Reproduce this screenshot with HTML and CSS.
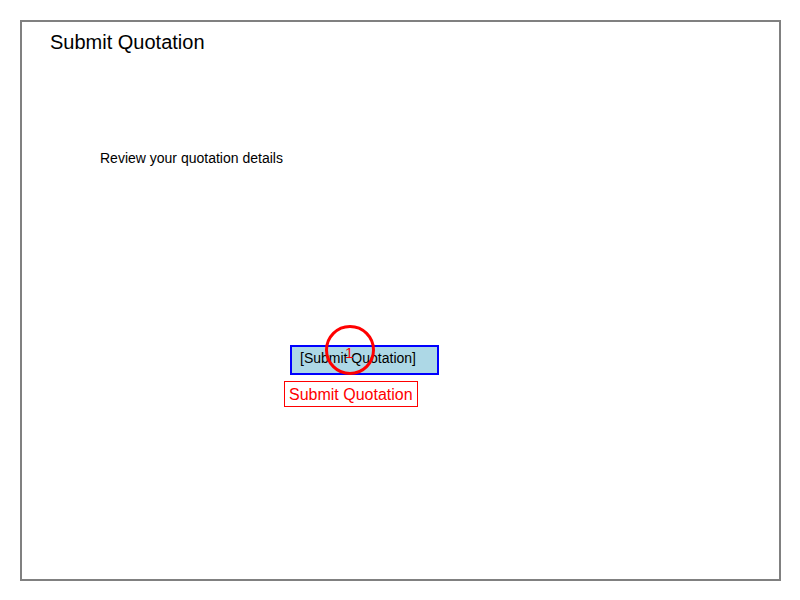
FILE: index.html
```html
<!DOCTYPE html>
<html>
<head>
<meta charset="utf-8">
<link rel="stylesheet" href="styles.css">
</head>
<body>
<div class="frame">
  <h1 class="title">Submit Quotation</h1>
  <p class="subtitle">Review your quotation details</p>
  <div class="action">
    <div class="button">[Submit Quotation]</div>
    <div class="marker"><span class="marker-num">1</span></div>
    <div class="label">Submit Quotation</div>
  </div>
</div>
</body>
</html>
```

FILE: styles.css
```css
html, body {
  margin: 0;
  padding: 0;
  background: #ffffff;
  font-family: "Liberation Sans", Arial, sans-serif;
}
.frame {
  position: relative;
  box-sizing: border-box;
  margin: 20px 0 0 20px;
  width: 761px;
  height: 561px;
  border: 2px solid #808080;
  padding: 9px 28px 0;
}
.title {
  margin: 0;
  font-size: 20px;
  font-weight: normal;
  line-height: 23px;
  color: #000;
}
.subtitle {
  margin: 96px 0 0 50px;
  font-size: 14px;
  line-height: 16px;
  color: #000;
}
.action {
  position: relative;
  margin: 179px 0 0 240px;
  width: 200px;
  height: 70px;
}
.button {
  box-sizing: border-box;
  width: 149px;
  height: 30px;
  border: 2px solid #0000ff;
  background: #add8e6;
  padding: 3px 0 0 8px;
  font-size: 14px;
  line-height: 16px;
  color: #000;
}
.marker {
  position: absolute;
  left: 35px;
  top: -20px;
  width: 44px;
  height: 44px;
  border: 3px solid #ff0000;
  border-radius: 50%;
}
.marker-num {
  position: absolute;
  left: 17px;
  top: 16px;
  font-size: 15px;
  line-height: 17px;
  color: #ff0000;
}
.label {
  position: absolute;
  left: -6px;
  top: 36px;
  box-sizing: border-box;
  height: 26px;
  border: 1px solid #ff0000;
  background: #fff;
  padding: 4px 4px 0 4px;
  font-size: 16px;
  line-height: 18px;
  color: #ff0000;
  white-space: nowrap;
}
```
